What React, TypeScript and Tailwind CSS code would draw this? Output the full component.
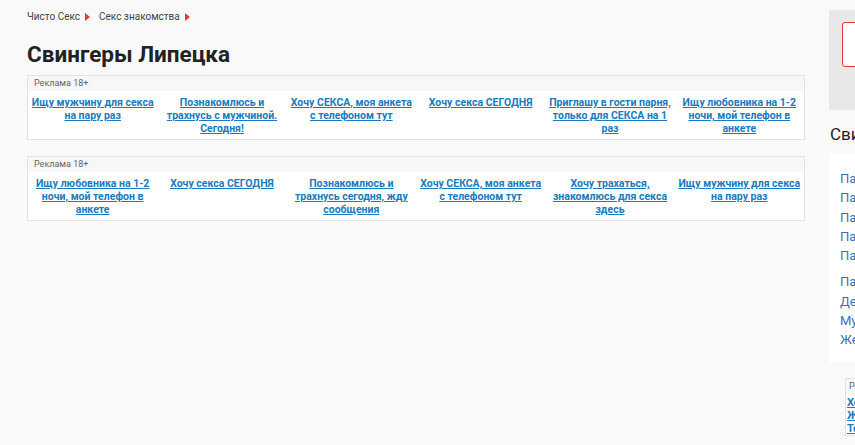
import React from 'react';

// each ad is split into the lines it shows in the block
const adsTop: string[][] = [
  ['Ищу мужчину для секса', 'на пару раз'],
  ['Познакомлюсь и', 'трахнусь с мужчиной.', 'Сегодня!'],
  ['Хочу СЕКСА, моя анкета', 'с телефоном тут'],
  ['Хочу секса СЕГОДНЯ'],
  ['Приглашу в гости парня,', 'только для СЕКСА на 1', 'раз'],
  ['Ищу любовника на 1-2', 'ночи, мой телефон в', 'анкете'],
];

const adsBottom: string[][] = [
  ['Ищу любовника на 1-2', 'ночи, мой телефон в', 'анкете'],
  ['Хочу секса СЕГОДНЯ'],
  ['Познакомлюсь и', 'трахнусь сегодня, жду', 'сообщения'],
  ['Хочу СЕКСА, моя анкета', 'с телефоном тут'],
  ['Хочу трахаться,', 'знакомлюсь для секса', 'здесь'],
  ['Ищу мужчину для секса', 'на пару раз'],
];

const sideLinks = ['Пары', 'Пары МЖ', 'Пары ЖЖ', 'Пары ММ', 'Пары для секса'];
const sideLinks2 = ['Пары Липецка', 'Девушки', 'Мужчины', 'Женщины'];

const Crumb: React.FC<{ label: string }> = ({ label }) => (
  <span className="flex items-center">
    <a className="text-[#444]">{label}</a>
    <span className="ml-[5px] w-0 h-0 border-y-[4px] border-y-transparent border-l-[5px] border-l-[#e53935]" />
  </span>
);

const AdBlock: React.FC<{ items: string[][] }> = ({ items }) => (
  <div className="border border-[#e2e2e2] bg-white">
    <div className="h-[15px] bg-[#f7f7f7] px-[6px] text-[9px] leading-[15px] text-[#666]">Реклама 18+</div>
    <div className="grid grid-cols-6 pt-[5px] pb-[4px]">
      {items.map((lines, i) => (
        <div
          key={i}
          className="text-center whitespace-nowrap text-[10.5px] leading-[13px] font-bold text-[#1a7bbf]"
        >
          {lines.map((l, j) => (
            <div key={j}>
              <a className="underline decoration-[#1a7bbf]">{l}</a>
            </div>
          ))}
        </div>
      ))}
    </div>
  </div>
);

export default function App() {
  return (
    <div className="w-[855px] h-[445px] overflow-hidden bg-[#f9f9f9] flex font-['Roboto','Liberation_Sans',sans-serif]">
      {/* Main column */}
      <div className="w-[805px] shrink-0 pl-[27px]">
        <div className="flex items-center gap-[9px] pt-[10px] text-[10px] leading-[14px]">
          <Crumb label="Чисто Секс" />
          <Crumb label="Секс знакомства" />
        </div>
        <h1 className="mt-[16px] text-[22.5px] leading-[28px] font-bold text-[#222]">Свингеры Липецка</h1>
        <div className="mt-[7px] flex flex-col gap-[16px]">
          <AdBlock items={adsTop} />
          <AdBlock items={adsBottom} />
        </div>
      </div>

      {/* Sidebar */}
      <div className="ml-[24px] w-[300px] shrink-0">
        <div className="mt-[10px] h-[100px] bg-[#e8e8e8] pt-[12px] pl-[13px]">
          <div className="h-[45px] w-[200px] rounded-[3px] border-[1.5px] border-[#e53935] bg-white" />
        </div>
        <div className="mt-[14px] pl-[1px] text-[17px] leading-[20px] text-[#222]">Свингеры Липецка</div>
        <div className="mt-[9px] bg-white pt-[16px] pb-[12px] text-[13px] leading-[19.3px] text-[#3f6fb5]">
          {sideLinks.map((l) => (
            <div key={l} className="pl-[11px]">{l}</div>
          ))}
          <div className="h-[7px]" />
          {sideLinks2.map((l) => (
            <div key={l} className="pl-[11px]">{l}</div>
          ))}
        </div>
        <div className="ml-[16px] mt-[16px] border border-[#e2e2e2] bg-white">
          <div className="h-[15px] bg-[#f7f7f7] px-[3px] text-[9px] leading-[15px] text-[#666]">Реклама 18+</div>
          <div className="px-[1px] pt-[2px] text-[11px] leading-[13px] font-bold text-[#1a7bbf] underline">
            Хочу секса СЕГОДНЯ<br />Жду звонка<br />Только сегодня
          </div>
        </div>
      </div>
    </div>
  );
}
